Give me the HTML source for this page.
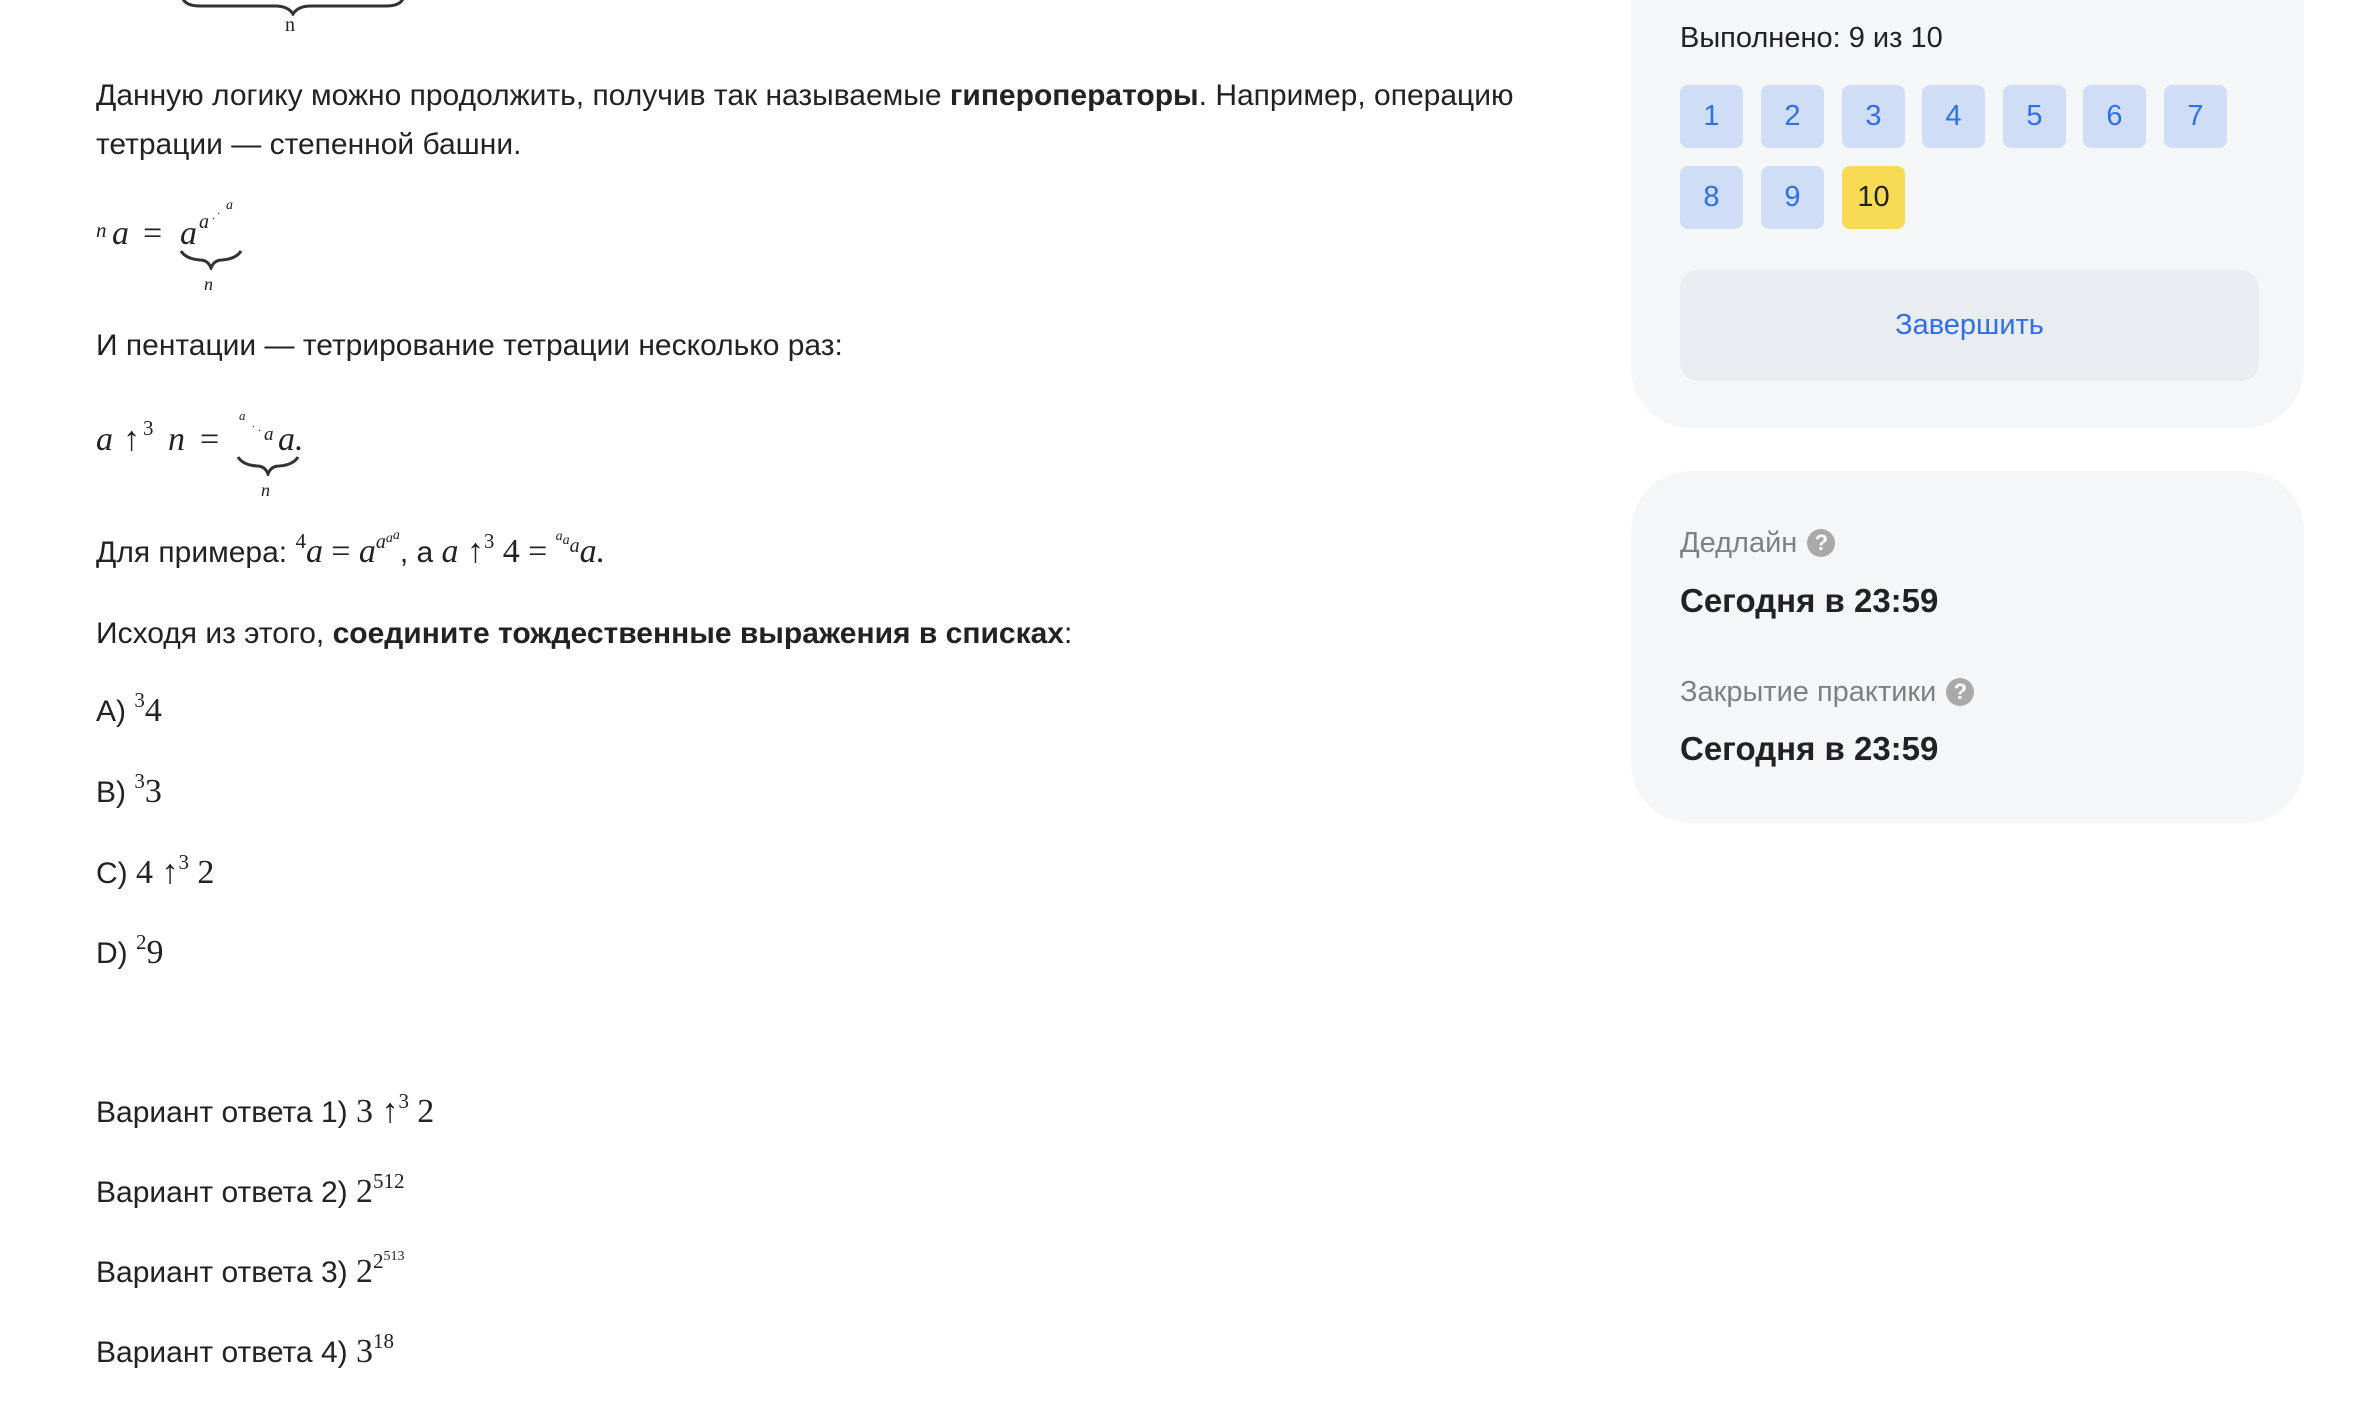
<!DOCTYPE html>
<html><head><meta charset="utf-8">
<style>
body{margin:0;width:2378px;height:1404px;background:#fff;position:relative;overflow:hidden;font-family:"Liberation Sans",sans-serif;color:#222;}
.t{position:absolute;left:96px;font-size:30px;line-height:32px;height:32px;white-space:nowrap;}
.m{font-family:"Liberation Serif",serif;font-style:italic;font-size:34px;}
.r{font-family:"Liberation Serif",serif;font-size:34px;}
.u{position:relative;top:-14px;font-family:"Liberation Serif",serif;font-size:21px;}
.s{position:absolute;font-family:"Liberation Serif",serif;font-style:italic;font-size:18px;}
.card{position:absolute;left:1631px;width:673px;background:#f5f6f8;border-radius:60px;}
.btn{position:absolute;width:63px;height:63px;border-radius:8px;background:#cfdef6;color:#2f6fe8;font-size:29px;text-align:center;line-height:63px;}
.q{display:inline-block;width:28px;height:28px;border-radius:50%;background:#a9a9a9;color:#fff;font-weight:bold;font-size:22px;line-height:28px;text-align:center;vertical-align:2px;margin-left:10px;}
</style></head><body>

<svg style="position:absolute;left:180px;top:-4px" width="226" height="20"><path d="M2 0 Q4 10 20 10 L95 10 Q108 10 113 18 Q118 10 131 10 L206 10 Q222 10 224 0" fill="none" stroke="#333" stroke-width="3"/></svg>
<div class="s" style="left:285px;top:14px;font-style:normal;font-size:20px">n</div>

<div class="t" style="top:80px">Данную логику можно продолжить, получив так называемые <b>гипероператоры</b>. Например, операцию</div>
<div class="t" style="top:129px">тетрации — степенной башни.</div>

<div class="t" style="top:218px;height:80px">
 <span class="s" style="left:0;top:-4px;font-size:21px">n</span>
 <span class="m" style="position:absolute;left:16px;top:0">a</span>
 <span class="r" style="position:absolute;left:47px;top:0">=</span>
 <span class="m" style="position:absolute;left:84px;top:0">a</span>
 <span class="s" style="left:103px;top:-12px;font-size:20px">a</span>
 <span class="s" style="left:116px;top:-16px;font-size:12px">·</span><span class="s" style="left:121px;top:-21px;font-size:12px">·</span>
 <span class="s" style="left:130px;top:-28px;font-size:14px">a</span>
 <svg style="position:absolute;left:84px;top:32px" width="62" height="20"><path d="M1 1 Q6 9 20 10 Q28 10 31 18 Q34 10 42 10 Q56 9 61 1" fill="none" stroke="#333" stroke-width="3"/></svg>
 <span class="s" style="left:108px;top:50px">n</span>
</div>

<div class="t" style="top:330px">И пентации — тетрирование тетрации несколько раз:</div>

<div class="t" style="top:424px;height:80px">
 <span class="m" style="position:absolute;left:0;top:0">a</span>
 <span class="r" style="position:absolute;left:27px;top:0">↑</span>
 <span class="u" style="position:absolute;left:47px;top:-12px">3</span>
 <span class="m" style="position:absolute;left:72px;top:0">n</span>
 <span class="r" style="position:absolute;left:104px;top:0">=</span>
 <span class="s" style="left:143px;top:-24px;font-size:13px">a</span>
 <span class="s" style="left:156px;top:-12px;font-size:10px">·</span><span class="s" style="left:162px;top:-8px;font-size:10px">·</span>
 <span class="s" style="left:168px;top:-5px;font-size:19px">a</span>
 <span class="m" style="position:absolute;left:182px;top:0">a.</span>
 <svg style="position:absolute;left:141px;top:32px" width="62" height="20"><path d="M1 1 Q6 9 20 10 Q28 10 31 18 Q34 10 42 10 Q56 9 61 1" fill="none" stroke="#333" stroke-width="3"/></svg>
 <span class="s" style="left:165px;top:50px">n</span>
</div>

<div class="t" style="top:536px">Для примера: <span class="u">4</span><span class="m">a</span> <span class="r">=</span> <span class="m">a<span style="position:relative;top:-14px;font-size:20px">a<span style="position:relative;top:-6px;font-size:14px">a<span style="position:relative;top:-3px">a</span></span></span></span>, а <span class="m">a</span> <span class="r">↑</span><span class="u">3</span> <span class="r">4</span> <span class="r">=</span> <span class="m" style="position:relative;top:-22px;font-size:14px">a</span><span class="m" style="position:relative;top:-18px;font-size:14px">a</span><span class="m" style="position:relative;top:-10px;font-size:20px">a</span><span class="m">a.</span></div>

<div class="t" style="top:618px">Исходя из этого, <b>соедините тождественные выражения в списках</b>:</div>

<div class="t" style="top:695px">A) <span class="u">3</span><span class="r">4</span></div>
<div class="t" style="top:776px">B) <span class="u">3</span><span class="r">3</span></div>
<div class="t" style="top:857px">C) <span class="r">4 ↑</span><span class="u">3</span> <span class="r">2</span></div>
<div class="t" style="top:937px">D) <span class="u">2</span><span class="r">9</span></div>

<div class="t" style="top:1096px">Вариант ответа 1) <span class="r">3 ↑</span><span class="u">3</span> <span class="r">2</span></div>
<div class="t" style="top:1176px">Вариант ответа 2) <span class="r">2</span><span class="u">512</span></div>
<div class="t" style="top:1256px">Вариант ответа 3) <span class="r">2</span><span class="u">2<span style="position:relative;top:-8px;font-size:14px">513</span></span></div>
<div class="t" style="top:1336px">Вариант ответа 4) <span class="r">3</span><span class="u">18</span></div>

<div class="card" style="top:-60px;height:488px">
 <div style="position:absolute;left:49px;top:82px;font-size:29px;color:#222">Выполнено: 9 из 10</div>
 <div class="btn" style="left:49px;top:145px">1</div>
 <div class="btn" style="left:130px;top:145px">2</div>
 <div class="btn" style="left:211px;top:145px">3</div>
 <div class="btn" style="left:291px;top:145px">4</div>
 <div class="btn" style="left:372px;top:145px">5</div>
 <div class="btn" style="left:452px;top:145px">6</div>
 <div class="btn" style="left:533px;top:145px">7</div>
 <div class="btn" style="left:49px;top:226px">8</div>
 <div class="btn" style="left:130px;top:226px">9</div>
 <div class="btn" style="left:211px;top:226px;background:#f8db55;color:#222">10</div>
 <div style="position:absolute;left:49px;top:330px;width:579px;height:111px;border-radius:18px;background:#e9ecf1;color:#2f6fe8;font-size:29px;text-align:center;line-height:111px">Завершить</div>
</div>

<div class="card" style="top:471px;height:352px">
 <div style="position:absolute;left:49px;top:56px;font-size:29px;color:#808080">Дедлайн<span class="q">?</span></div>
 <div style="position:absolute;left:49px;top:111px;font-size:33px;font-weight:bold;color:#222">Сегодня в 23:59</div>
 <div style="position:absolute;left:49px;top:205px;font-size:29px;color:#808080">Закрытие практики<span class="q">?</span></div>
 <div style="position:absolute;left:49px;top:259px;font-size:33px;font-weight:bold;color:#222">Сегодня в 23:59</div>
</div>
</body></html>
